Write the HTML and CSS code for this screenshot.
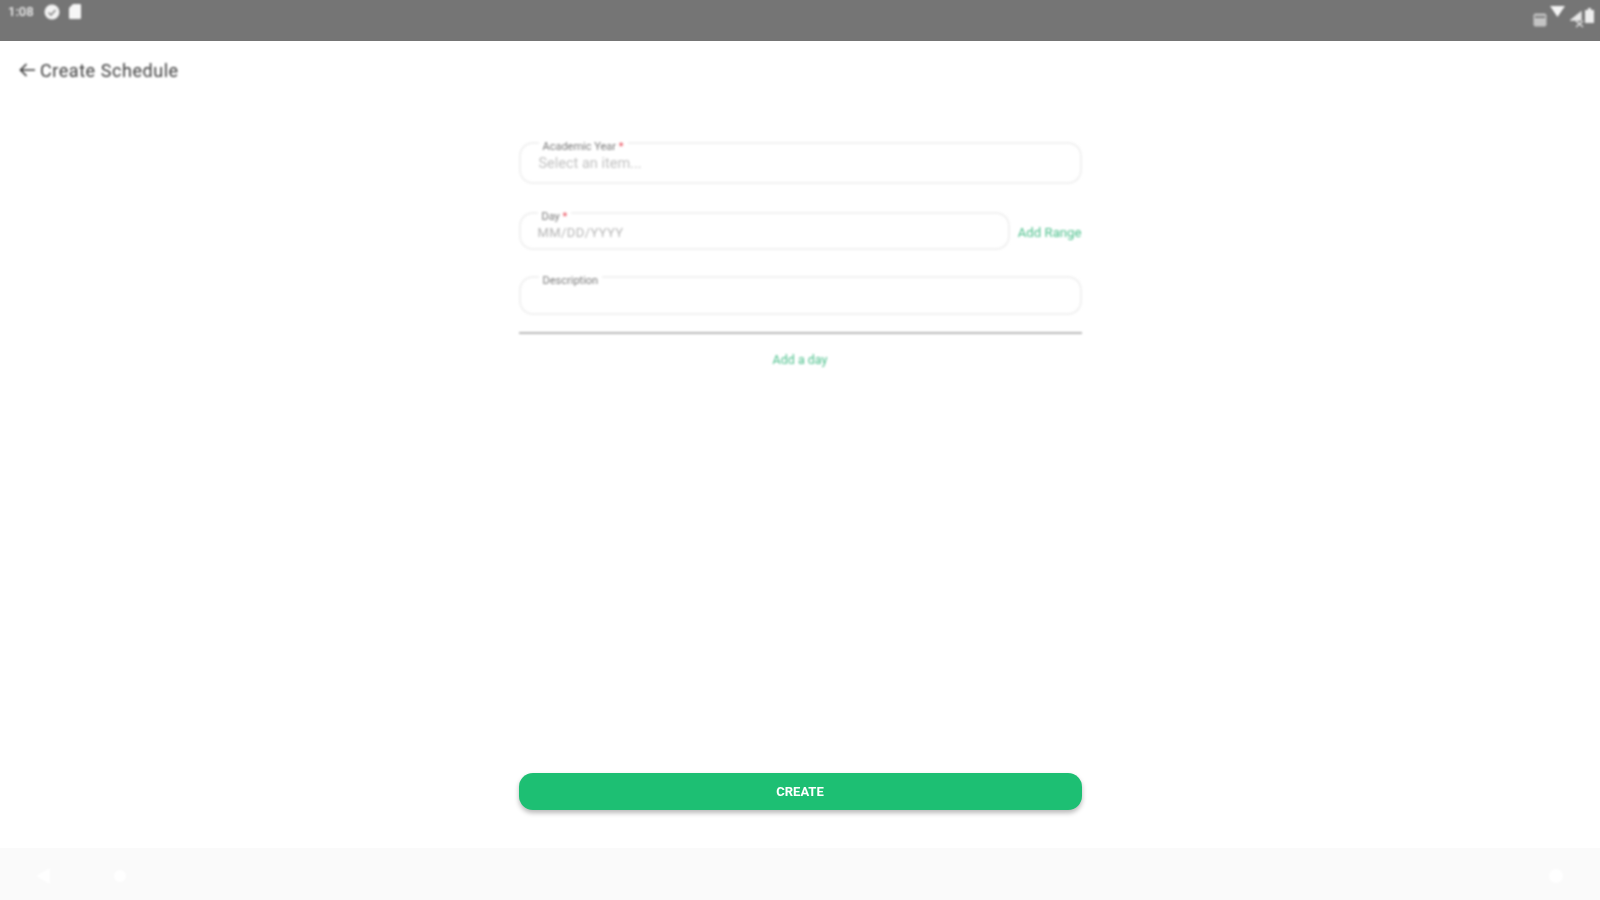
FILE: index.html
```html
<!DOCTYPE html>
<html lang="en">
<head>
  <meta charset="UTF-8">
  <meta name="viewport" content="width=device-width, initial-scale=1.0">
  <title>Create Schedule</title>
  <link rel="stylesheet" href="styles.css">
</head>
<body>
  <div class="status-bar">
    <div class="status-left">
      <span class="status-time">1:08</span>
      <svg class="status-icon" width="16" height="16" viewBox="0 0 16 16"><circle cx="8" cy="8" r="7.500" fill="#f4f4f4"/><path d="M4.500 8.500l2.500 2.500 4.500-5" fill="none" stroke="#8a8a8a" stroke-width="1.600"/></svg>
      <svg class="status-icon sd" width="12" height="15" viewBox="0 0 12 15"><path d="M4 0h7a1 1 0 0 1 1 1v13a1 1 0 0 1-1 1H1a1 1 0 0 1-1-1V4z" fill="#f6f6f6"/></svg>
    </div>
    <div class="status-right">
      <svg class="tray-box" width="14" height="14" viewBox="0 0 14 14"><rect x="0.500" y="0.500" width="13" height="13" rx="2" fill="#c4c4c4"/><rect x="2" y="3" width="10" height="2" fill="#7d7d7d"/></svg>
      <svg class="tray-wifi" width="15" height="11" viewBox="0 0 15 11"><path d="M0 0h15L7.500 11z" fill="#f4f4f4"/></svg>
      <svg class="tray-cross" width="18" height="18" viewBox="0 0 18 18"><path d="M1 10L11 2v8zM6 11l7 6M13 11l-7 6" fill="#e8e8e8" stroke="#e8e8e8" stroke-width="1.300"/></svg>
      <svg class="tray-battery" width="9" height="15" viewBox="0 0 9 15"><path d="M3 0h3v2h3v13H0V2h3z" fill="#ededed"/></svg>
    </div>
  </div>

  <header class="title-row">
    <svg class="back-arrow" width="16" height="14" viewBox="0 0 16 14"><path d="M16 7H2M7.500 1L1.500 7l6 6" fill="none" stroke="#3a3a3a" stroke-width="1.700"/></svg>
    <h1 class="page-title">Create Schedule</h1>
  </header>

  <main class="content">
    <form class="schedule-form">
      <fieldset class="field field-year">
        <legend>Academic Year <span class="req">*</span></legend>
        <span class="placeholder">Select an item...</span>
      </fieldset>

      <div class="day-row">
        <fieldset class="field field-day">
          <legend>Day <span class="req">*</span></legend>
          <span class="placeholder date">MM/DD/YYYY</span>
        </fieldset>
        <a class="link add-range">Add Range</a>
      </div>

      <fieldset class="field field-desc">
        <legend>Description</legend>
      </fieldset>

      <hr class="divider">
      <a class="link add-day">Add a day</a>
    </form>

    <button type="button" class="create-btn">CREATE</button>
  </main>

  <footer class="nav-bar">
    <div class="nav-left">
      <svg width="16" height="18" viewBox="0 0 16 18"><path d="M15 1v16L1 9z" fill="#fff"/></svg>
      <span class="nav-dot"></span>
    </div>
    <span class="nav-dot nav-dot-right"></span>
  </footer>
</body>
</html>
```

FILE: styles.css
```css
html, body { height: 100%; }
body { margin: 0; width: 1600px; height: 900px; display: flex; flex-direction: column; overflow: hidden; background: #fff; font-family: Roboto, "Liberation Sans", sans-serif; color: #333; }

.status-bar { height: 41px; flex: none; display: flex; justify-content: space-between; background: #757575; box-sizing: border-box; padding: 4px 6px 0 8px; }
.status-left { display: flex; align-items: flex-start; filter: blur(0.9px); }
.status-time { font-size: 13px; line-height: 16px; font-weight: 500; color: #f0f0f0; width: 28px; }
.status-icon { margin-left: 8px; }
.status-icon.sd { margin-left: 9px; }
.status-right { display: flex; align-items: flex-start; filter: blur(0.9px); }
.tray-box { margin-top: 9px; }
.tray-wifi { margin-left: 3px; margin-top: 2px; }
.tray-cross { margin-left: 5px; margin-top: 6px; }
.tray-battery { margin-left: -3px; margin-top: 4px; }

.title-row { flex: none; height: 58px; display: flex; align-items: center; box-sizing: border-box; padding-left: 19px; filter: blur(0.9px); }
.back-arrow { margin-right: 4px; }
.page-title { margin: 0 0 0 1px; font-size: 18px; font-weight: 400; color: #3c3c3c; letter-spacing: 0.55px; }

.content { flex: 1; width: 563px; margin: 0 auto; display: flex; flex-direction: column; justify-content: space-between; box-sizing: border-box; padding: 39px 0 38px; }
.schedule-form { display: flex; flex-direction: column; filter: blur(0.9px); }

.field { display: block; margin: 0; min-width: 0; box-sizing: border-box; border: 2px solid #f1f1f1; border-radius: 14px; padding: 0 0 0 18px; }
.field legend { margin-left: 0; padding: 0 4px; font-size: 11px; line-height: 10px; color: #7a7a7a; position: relative; top: 4px; }
.req { color: #e8404f; }
.field-year { width: 100%; height: 46px; }
.field-day { flex: 1; height: 42px; padding-left: 17px; }
.field-desc { width: 100%; height: 43px; margin-top: 22px; }

.placeholder { display: block; margin-top: 8px; font-size: 14.500px; line-height: 16px; color: #c2c2c2; }
.placeholder.date { margin-top: 7px; font-size: 13px; letter-spacing: 0.4px; color: #b5b5b5; }

.day-row { display: flex; align-items: center; margin-top: 24px; }
.link { font-size: 12.500px; line-height: 14px; color: #4cc08c; }
.add-range { margin-left: 8px; flex: none; font-size: 13.200px; position: relative; top: 4px; }
.divider { width: 100%; height: 2px; margin: 17px 0 0; border: 0; background: #b9b9b9; }
.add-day { align-self: center; margin-top: 19px; }

.create-btn { height: 37px; width: 100%; border: 0; border-radius: 14px; background: #1dbf73; color: #fff; font-family: inherit; font-size: 13px; font-weight: 700; box-shadow: 0 3px 5px rgba(0, 0, 0, 0.28); filter: blur(0.6px); }

.nav-bar { flex: none; height: 52px; display: flex; justify-content: space-between; align-items: center; box-sizing: border-box; padding: 4px 37px 0 35px; background: #fafafa; }
.nav-left { display: flex; align-items: center; gap: 63px; filter: blur(1px); }
.nav-dot { width: 12px; height: 12px; border-radius: 50%; background: #fff; }
.nav-dot-right { width: 14px; height: 14px; filter: blur(1px); }
```
